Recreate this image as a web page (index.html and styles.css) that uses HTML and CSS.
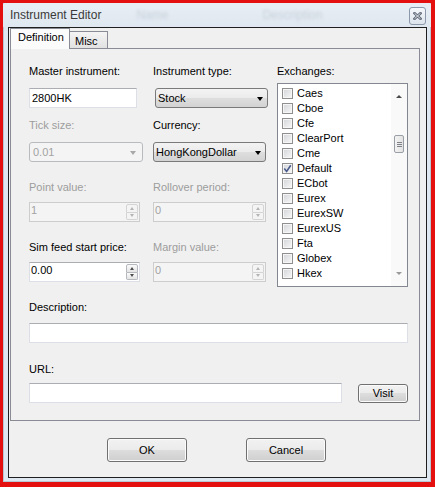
FILE: index.html
```html
<!DOCTYPE html>
<html>
<head>
<meta charset="utf-8">
<title>Instrument Editor</title>
<link rel="stylesheet" href="styles.css">
</head>
<body>
<div class="screen">
  <div class="window">
    <div class="titlebar">
      <span class="title">Instrument Editor</span>
      <span class="ghost ghost-name">Name</span>
      <span class="ghost ghost-desc">Description</span>
      <span class="close">
        <svg width="9" height="8" viewBox="0 0 9 8">
          <path d="M1.5 1.2 L7.5 6.8 M7.5 1.2 L1.5 6.8" stroke="#5c6674" stroke-width="2.6" stroke-linecap="square" fill="none"/>
          <path d="M1.5 1.2 L7.5 6.8 M7.5 1.2 L1.5 6.8" stroke="#f6f7f8" stroke-width="0.9" fill="none"/>
        </svg>
      </span>
    </div>
    <div class="client">
      <div class="tabview">
        <div class="tabs">
          <div class="tab tab-active">Definition</div>
          <div class="tab">Misc</div>
        </div>
        <div class="panel">
          <div class="top">
            <div class="left">
              <div class="row">
                <div class="col">
                  <div class="lbl">Master instrument:</div>
                  <div class="textbox w108">2800HK</div>
                </div>
                <div class="col">
                  <div class="lbl">Instrument type:</div>
                  <div class="combo w113 shift2"><span>Stock</span><span class="arrow"></span></div>
                </div>
              </div>
              <div class="row row2">
                <div class="col">
                  <div class="lbl dis">Tick size:</div>
                  <div class="combo combo-dis w114"><span>0.01</span><span class="arrow"></span></div>
                </div>
                <div class="col">
                  <div class="lbl">Currency:</div>
                  <div class="combo w113"><span>HongKongDollar</span><span class="arrow"></span></div>
                </div>
              </div>
              <div class="row row3">
                <div class="col">
                  <div class="lbl short dis">Point value:</div>
                  <div class="spin spin-dis w111"><span class="val">1</span><span class="spinbtns"><span class="sb sb-up"></span><span class="sb sb-down"></span></span></div>
                </div>
                <div class="col">
                  <div class="lbl short dis">Rollover period:</div>
                  <div class="spin spin-dis w113"><span class="val">0</span><span class="spinbtns"><span class="sb sb-up"></span><span class="sb sb-down"></span></span></div>
                </div>
              </div>
              <div class="row row3">
                <div class="col">
                  <div class="lbl short">Sim feed start price:</div>
                  <div class="spin w111"><span class="val">0.00</span><span class="spinbtns"><span class="sb sb-up"></span><span class="sb sb-down"></span></span></div>
                </div>
                <div class="col">
                  <div class="lbl short dis">Margin value:</div>
                  <div class="spin spin-dis w113"><span class="val">0</span><span class="spinbtns"><span class="sb sb-up"></span><span class="sb sb-down"></span></span></div>
                </div>
              </div>
            </div>
            <div class="exch">
              <div class="lbl lbl-exch">Exchanges:</div>
              <div class="list">
                <div class="items">
                  <div class="item"><span class="cb"></span>Caes</div>
                  <div class="item"><span class="cb"></span>Cboe</div>
                  <div class="item"><span class="cb"></span>Cfe</div>
                  <div class="item"><span class="cb"></span>ClearPort</div>
                  <div class="item"><span class="cb"></span>Cme</div>
                  <div class="item"><span class="cb"><svg width="9" height="9" viewBox="0 0 9 9"><path d="M1.3 4.6 L3.6 7.4 L7.8 1.2" stroke="#4a5b8c" stroke-width="1.6" fill="none"/></svg></span>Default</div>
                  <div class="item"><span class="cb"></span>ECbot</div>
                  <div class="item"><span class="cb"></span>Eurex</div>
                  <div class="item"><span class="cb"></span>EurexSW</div>
                  <div class="item"><span class="cb"></span>EurexUS</div>
                  <div class="item"><span class="cb"></span>Fta</div>
                  <div class="item"><span class="cb"></span>Globex</div>
                  <div class="item"><span class="cb"></span>Hkex</div>
                </div>
                <div class="sbar">
                  <span class="sarrow sarrow-up"></span>
                  <span class="thumb"><span class="grip"></span><span class="grip"></span><span class="grip"></span></span>
                  <span class="sarrow sarrow-down"></span>
                </div>
              </div>
            </div>
          </div>
          <div class="desc">
            <div class="lbl lbl-desc">Description:</div>
            <div class="textbox w379"></div>
          </div>
          <div class="url">
            <div class="lbl lbl-url">URL:</div>
            <div class="urlrow">
              <div class="textbox w313"></div>
              <div class="btn btn-visit">Visit</div>
            </div>
          </div>
        </div>
      </div>
      <div class="buttons">
        <div class="btn btn-main">OK</div>
        <div class="btn btn-main">Cancel</div>
      </div>
    </div>
  </div>
</div>
</body>
</html>
```

FILE: styles.css
```css
* { box-sizing: border-box; }

body {
  margin: 0;
  font-family: "Liberation Sans", Arial, sans-serif;
  font-size: 11px;
  color: #000;
}

.screen {
  width: 435px;
  height: 487px;
  padding: 3px 4px 5px 3px;
  background: #e4100f;
  overflow: hidden;
}

.window {
  width: 428px;
  height: 479px;
  background: #dfe7f0;
  box-shadow: inset 0 0 0 1px #b8c5d3;
  display: flex;
  flex-direction: column;
}

.titlebar {
  height: 24px;
  display: flex;
  align-items: flex-start;
  padding: 0 5px 0 7px;
  background: linear-gradient(#e8eef4, #dfe7f0);
  border-radius: 2px 2px 0 0;
}

.title {
  font-size: 12px;
  line-height: 14px;
  margin-top: 5px;
  color: #3a3a3a;
}

.ghost {
  font-size: 12px;
  line-height: 14px;
  margin-top: 5px;
  color: #c8d0da;
  filter: blur(1.4px);
}

.ghost-name { margin-left: 35px; }
.ghost-desc { margin-left: 94px; }

.close {
  margin-left: auto;
  margin-top: 4px;
  width: 17px;
  height: 18px;
  border: 1px solid #8c99aa;
  border-radius: 3px;
  background: linear-gradient(#f6f8fa, #dde4ec);
  display: flex;
  align-items: center;
  justify-content: center;
}

.client {
  margin-left: 5px;
  width: 419px;
  height: 451px;
  border: 1px solid #1f1f1f;
  background: #f0f0f0;
  display: flex;
  flex-direction: column;
}

.tabview {
  margin-left: 1px;
  width: 410px;
}

.tabs {
  display: flex;
  align-items: flex-start;
  height: 20px;
}

.tab {
  width: 38px;
  height: 17px;
  margin-top: 3px;
  padding: 3px 0 0 5px;
  line-height: 13px;
  border: 1px solid #898c95;
  border-left: none;
  border-bottom: none;
  background: linear-gradient(#f4f4f4, #e2e2e2);
}

.tab-active {
  position: relative;
  z-index: 1;
  width: 60px;
  height: 21px;
  margin-top: 0;
  padding: 2px 0 0 7px;
  border-left: 1px solid #898c95;
  background: #fbfbfb;
}

.panel {
  height: 373px;
  border: 1px solid #898c95;
  background: #f0f0f0;
  padding: 16px 10px 16px 18px;
}

.top { display: flex; }

.left { width: 248px; }

.row { display: flex; }
.row2 { margin-top: 11px; }
.row3 { margin-top: 19px; }

.col { width: 124px; }

.lbl {
  line-height: 13px;
  height: 23px;
}

.lbl.short { height: 21px; }
.lbl-exch { height: 18px; }
.lbl-desc { height: 22px; }
.lbl-url { height: 20px; }

.dis { color: #9d9d9d; }

.w108 { width: 108px; }
.w111 { width: 111px; }
.w113 { width: 113px; }
.w114 { width: 114px; }
.w313 { width: 313px; }
.w379 { width: 379px; }
.shift2 { margin-left: 2px; }

.textbox {
  height: 20px;
  border: 1px solid #dcdfe5;
  border-top-color: #abadb3;
  background: #fff;
  padding: 3px 0 0 2px;
  line-height: 13px;
}

.combo {
  height: 20px;
  border: 1px solid #7a7a7a;
  border-radius: 3px;
  background: linear-gradient(#f3f3f3 0%, #ebebeb 50%, #dedede 50%, #d3d3d3 100%);
  display: flex;
  align-items: center;
  justify-content: space-between;
  padding: 1px 4px 0 2px;
  line-height: 13px;
}

.combo .arrow {
  width: 0;
  height: 0;
  border-left: 3.5px solid transparent;
  border-right: 3.5px solid transparent;
  border-top: 4px solid #000;
}

.combo-dis {
  border-color: #b9bcbf;
  background: #f4f4f4;
  color: #a3a3a3;
  padding-left: 3px;
  padding-right: 6px;
}

.combo-dis .arrow { border-top-color: #a8a8a8; }

.spin {
  height: 20px;
  border: 1px solid #dcdfe5;
  border-top-color: #abadb3;
  background: #fff;
  display: flex;
  align-items: flex-start;
}

.spin .val {
  flex: 1;
  line-height: 13px;
  padding: 1px 0 0 1px;
}

.spin-dis {
  background: #f4f4f4;
  border-color: #cdcdcd;
  color: #a3a3a3;
}

.spinbtns {
  width: 12px;
  align-self: stretch;
  margin: 1px 1px 1px 0;
  display: flex;
  flex-direction: column;
}

.sb {
  flex: 1;
  border: 1px solid #b5b9be;
  background: linear-gradient(#fafafa, #e4e4e4);
  display: flex;
  align-items: center;
  justify-content: center;
}

.sb-up { border-radius: 2px 2px 0 0; }
.sb-down { border-radius: 0 0 2px 2px; border-top: none; }

.sb::after {
  content: "";
  width: 0;
  height: 0;
  border-left: 2.5px solid transparent;
  border-right: 2.5px solid transparent;
}

.sb-up::after { border-bottom: 3px solid #4d4d4d; }
.sb-down::after { border-top: 3px solid #4d4d4d; }

.spin-dis .sb { border-color: #d4d4d4; background: #f4f4f4; }
.spin-dis .sb-up::after { border-bottom-color: #b4b4b4; }
.spin-dis .sb-down::after { border-top-color: #b4b4b4; }

.exch { width: 131px; margin-left: 0; }

.list {
  height: 204px;
  border: 1px solid #828790;
  background: #fff;
  display: flex;
  overflow: hidden;
}

.items {
  flex: 1;
  padding: 2px 0 0 4px;
}

.item {
  height: 15px;
  display: flex;
  align-items: center;
  line-height: 13px;
}

.cb {
  width: 11px;
  height: 11px;
  margin-right: 4px;
  border: 1px solid #8f8f8f;
  background: linear-gradient(135deg, #d2d4d8, #f8f8f8);
  box-shadow: inset 0 0 0 1px #f6f6f6;
  display: flex;
  align-items: center;
  justify-content: center;
}

.sbar {
  width: 16px;
  background: #f9f9f9;
  display: flex;
  flex-direction: column;
  align-items: center;
  padding-top: 11px;
}

.sarrow {
  width: 0;
  height: 0;
  border-left: 3px solid transparent;
  border-right: 3px solid transparent;
}

.sarrow-up { border-bottom: 3px solid #4a4a4a; }
.sarrow-down { border-top: 3px solid #9a9a9a; margin-top: auto; margin-bottom: 11px; }

.thumb {
  margin-top: 37px;
  width: 10px;
  height: 18px;
  border: 1px solid #9a9ea5;
  border-radius: 2px;
  background: linear-gradient(90deg, #f3f3f3, #e3e3e3);
  display: flex;
  flex-direction: column;
  align-items: center;
  justify-content: center;
  gap: 1px;
}

.grip {
  width: 5px;
  height: 1px;
  background: #7e8288;
}

.desc { margin-top: 14px; }
.url { margin-top: 20px; }

.urlrow {
  display: flex;
  align-items: flex-start;
}

.btn {
  border: 1px solid #707070;
  border-radius: 3px;
  background: linear-gradient(#f2f2f2 0%, #ebebeb 50%, #dddddd 50%, #cfcfcf 100%);
  box-shadow: inset 0 0 0 1px #fbfbfb;
  display: flex;
  align-items: center;
  justify-content: center;
  line-height: 13px;
}

.btn-visit {
  width: 50px;
  height: 19px;
  margin: 1px 0 0 16px;
}

.buttons {
  display: flex;
  justify-content: center;
  gap: 59px;
  margin-top: 17px;
  padding-right: 2px;
}

.btn-main {
  width: 80px;
  height: 24px;
}
```
